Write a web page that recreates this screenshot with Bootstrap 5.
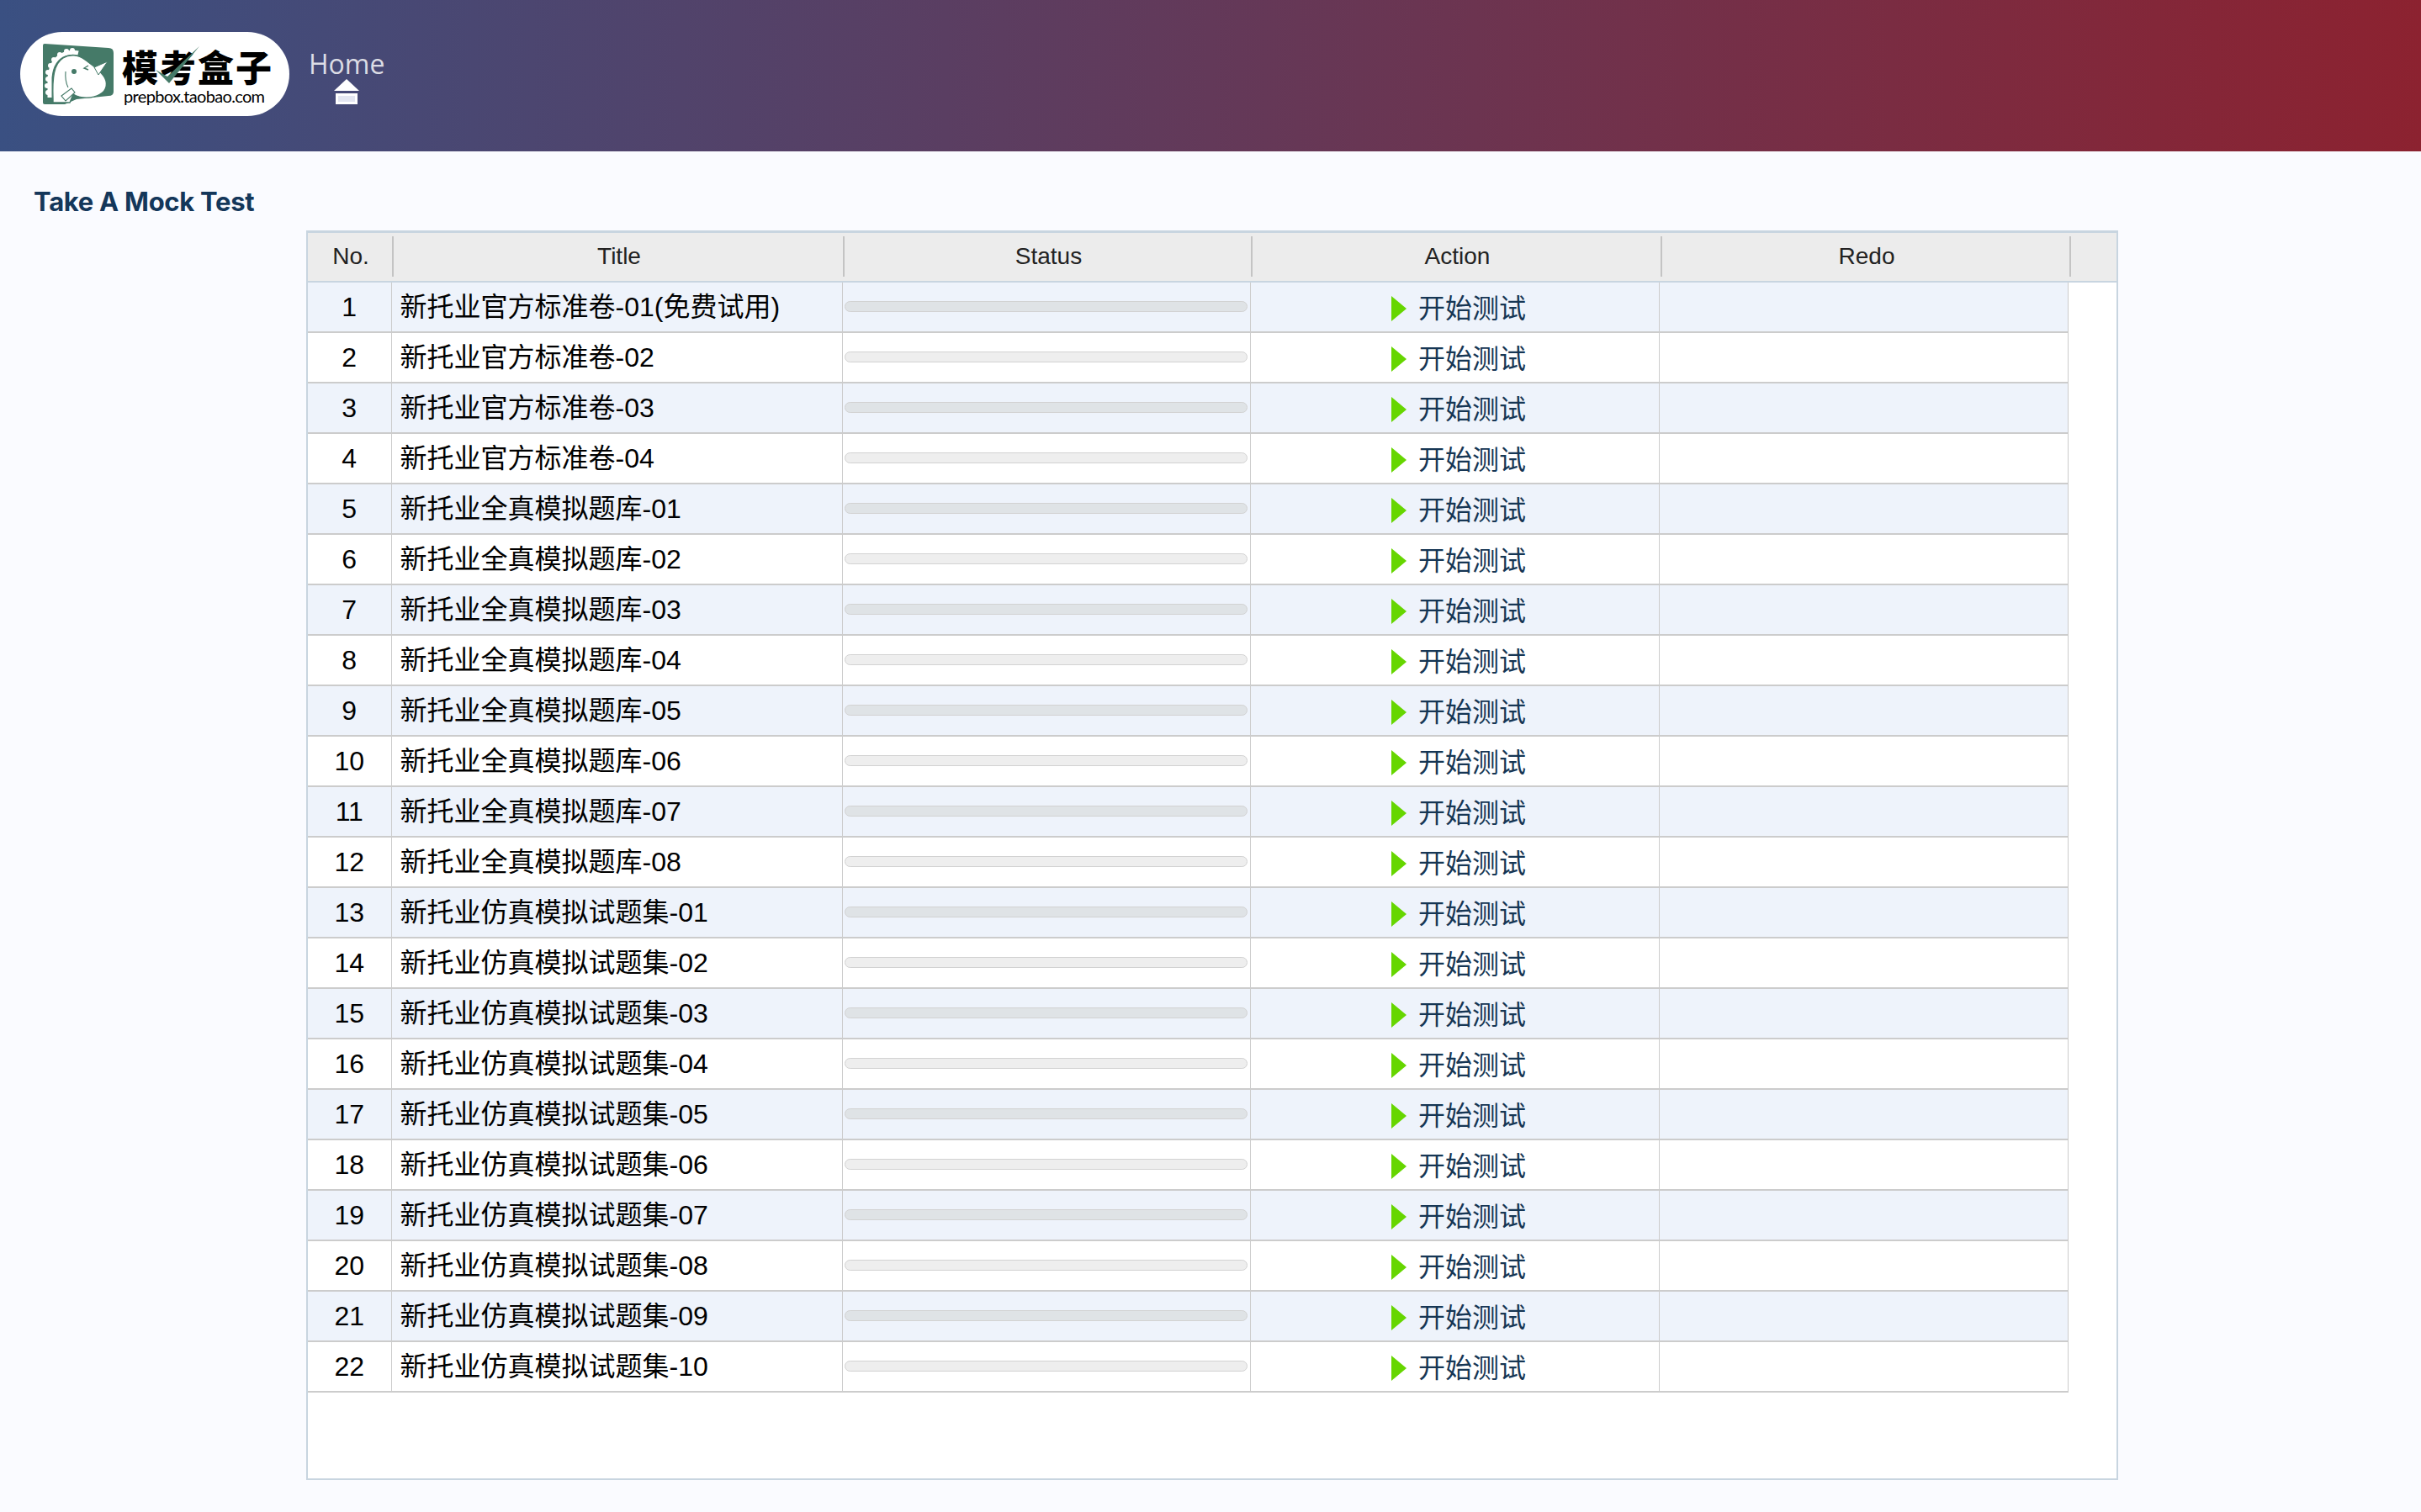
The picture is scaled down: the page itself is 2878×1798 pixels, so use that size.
<!DOCTYPE html>
<html lang="en">
<head>
    <meta charset="UTF-8">
    <title>Take A Mock Test</title>
    <link href="https://cdn.jsdelivr.net/npm/bootstrap@5.3.0/dist/css/bootstrap.min.css" rel="stylesheet">
    <style>
        body { background-color: #fafbff; font-family: "Liberation Sans", "Noto Sans CJK SC", sans-serif; color: #000; min-height: 1798px; }
        .top-bar { height: 180px; background: linear-gradient(90deg, #3a5082, #8c2230); padding: 0 0 4px 24px; }
        .logo-pill { width: 320px; height: 100px; border-radius: 50px; background: #fff; padding-left: 27px; }
        .logo-text { margin-left: 10px; padding-top: 2px; }
        .logo-cn { font-family: "Noto Sans CJK SC", sans-serif; font-weight: 900; font-size: 43px; line-height: 50px; letter-spacing: 2px; color: #000; white-space: nowrap; }
        .logo-en { font-family: Lato, sans-serif; font-size: 20px; line-height: 22px; letter-spacing: -0.67px; padding-left: 2px; color: #000; white-space: nowrap; }
        .home-link { margin: 4px 0 0 23px; color: rgba(255, 255, 255, .82); font-family: "Open Sans", sans-serif; font-size: 32px; line-height: 40px; text-decoration: none; }
        .home-link svg { margin-top: -2px; }
        .page-title { font-family: Inter, sans-serif; font-weight: 700; font-size: 31px; letter-spacing: -0.28px; color: #14375a; margin: 0; padding: 41px 0 1px 40px; line-height: 38px; }
        .grid-panel { width: 2154px; height: 1486px; margin: 14px 0 0 364px; background: #fff; border: 2px solid #c8d5e0; border-top-width: 3px; }
        .grid-head { height: 59px; background: #ececec; border-bottom: 2px solid #c8d5e0; font-size: 28px; color: #222; padding: 4px 0 5px; }
        .grid-head > div { border-right: 2px solid #c4c4c4; padding-left: 2px; }
        .grid-table { width: 2092px; table-layout: fixed; margin: 0; border-collapse: collapse; }
        .grid-table td { height: 60px; padding: 0; border: 0; border-right: 1px solid #ccc; border-bottom: 2px solid #ccc; font-size: 32px; line-height: 1; vertical-align: middle; background: transparent; box-shadow: none; color: #000; }
        .grid-table tr:first-child td { height: 59px; }
        .grid-table tr:nth-child(odd) { background: #eef3fb; }
        .cell-title { padding-left: 10px !important; white-space: nowrap; }
        .status-bar { height: 13px; margin: 0 3px 2px 2px; border: 1px solid #d2d2d2; border-radius: 7px; background: #eee; }
        .grid-table tr:nth-child(odd) .status-bar { background: #dfe3e6; }
        .start-link { color: #163654; text-decoration: none; gap: 14px; padding-top: 3px; padding-left: 10px; }
    </style>
</head>
<body>
    <nav class="top-bar d-flex align-items-center">
        <div class="logo-pill d-flex align-items-center">
            <svg width="84" height="72" viewBox="0 0 84 72" class="flex-shrink-0">
                <path d="M2 0 L78 5 Q84 5 84 11 L84 57 Q84 62 78 62 L40 66 L26 72 L2 72 Q0 72 0 70 L0 2 Q0 0 2 0Z" fill="#457a68"/>
                <g fill="#fff">
                    <circle cx="6" cy="58" r="3"/><circle cx="5" cy="50" r="3"/><circle cx="6" cy="42" r="3"/><circle cx="6" cy="34" r="3"/>
                    <circle cx="9" cy="26" r="3"/><circle cx="13" cy="19" r="3"/><circle cx="20" cy="13" r="3"/><circle cx="28" cy="9" r="3"/><circle cx="35" cy="8" r="3"/>
                </g>
                <path d="M8 64 L8 40 Q10 18 26 12 Q34 9 42 11" fill="none" stroke="#fff" stroke-width="5"/>
                <path d="M12 66 C11 40 13 24 24 17 C32 12 42 13 50 19 C58 25 66 30 72 38 C78 46 76 56 68 60 C58 66 44 65 36 60 L32 70 L12 70Z" fill="#fff" stroke="#457a68" stroke-width="1.4"/>
                <path d="M27 33 Q26 44 30 52" fill="none" stroke="#457a68" stroke-width="1.1"/>
                <circle cx="37" cy="33" r="3" fill="#457a68"/>
                <path d="M54 26 L49 29 L54 31" fill="none" stroke="#457a68" stroke-width="1.4"/>
                <path d="M61 28 L66 37 L77 21Z" fill="#fff" stroke="#457a68" stroke-width="1"/>
                <path d="M22 62 L34 53 L38 58 L27 68Z" fill="#fff" stroke="#457a68" stroke-width="1.1"/>
            </svg>
            <div class="logo-text">
                <div class="logo-cn position-relative">模考盒子
                    <svg class="position-absolute top-0 start-0" width="100" height="50" viewBox="0 0 100 50"><path d="M40 30 L54 38 L92 2 L56 46Z" fill="#457a68"/></svg>
                </div>
                <div class="logo-en">prepbox.taobao.com</div>
            </div>
        </div>
        <a class="home-link d-flex flex-column align-items-center" href="#">
            Home
            <svg width="30" height="30" viewBox="0 0 30 30"><path d="M15 0 L30 14 L0 14Z" fill="#fff"/><rect x="3.500" y="18.500" width="23" height="10" fill="#e3e6f1" stroke="#fff" stroke-width="3"/></svg>
        </a>
    </nav>

    <h1 class="page-title">Take A Mock Test</h1>

    <div class="grid-panel">
        <div class="grid-head d-flex text-center">
            <div class="d-flex align-items-center justify-content-center" style="width:102px">No.</div>
            <div class="d-flex align-items-center justify-content-center" style="width:536px">Title</div>
            <div class="d-flex align-items-center justify-content-center" style="width:485px">Status</div>
            <div class="d-flex align-items-center justify-content-center" style="width:487px">Action</div>
            <div class="d-flex align-items-center justify-content-center" style="width:486px">Redo</div>
        </div>
        <table class="table grid-table">
            <colgroup><col style="width:99px"><col style="width:536px"><col style="width:485px"><col style="width:486px"><col style="width:486px"></colgroup>
            <tbody id="rows"></tbody>
        </table>
    </div>

    <script>
    // 4 official papers, 8 full mock banks, 10 simulated sets
    const titles = ["新托业官方标准卷-01(免费试用)", "新托业官方标准卷-02", "新托业官方标准卷-03", "新托业官方标准卷-04"];
    for (let i = 1; i <= 8; i++) titles.push("新托业全真模拟题库-0" + i);
    for (let i = 1; i <= 10; i++) titles.push("新托业仿真模拟试题集-" + String(i).padStart(2, "0"));

    document.getElementById("rows").innerHTML = titles.map((t, i) => `
        <tr>
            <td class="text-center">${i + 1}</td>
            <td class="cell-title">${t}</td>
            <td><div class="status-bar"></div></td>
            <td><a class="start-link d-flex align-items-center justify-content-center" href="#">
                <svg width="18" height="30" viewBox="0 0 18 30"><path d="M0 0 L18 15 L0 30Z" fill="#66d600"/></svg>开始测试</a></td>
            <td></td>
        </tr>`).join("");
    </script>
    <script src="https://cdn.jsdelivr.net/npm/bootstrap@5.3.0/dist/js/bootstrap.bundle.min.js"></script>
</body>
</html>
